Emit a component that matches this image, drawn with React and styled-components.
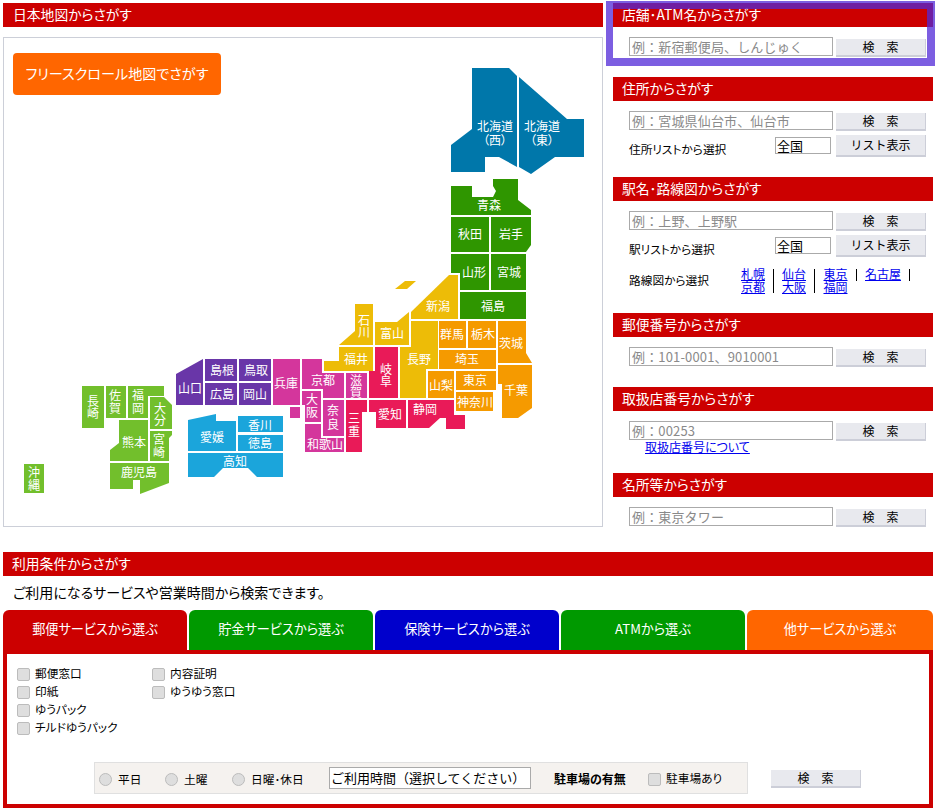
import React from "react";
import styled, { createGlobalStyle } from "styled-components";

const GlobalStyle = createGlobalStyle`
  html, body { margin: 0; padding: 0; background: #fff; }
  body {
    font-family: "Noto Sans CJK JP", "Liberation Sans", sans-serif;
    font-feature-settings: "palt";
    font-size: 11.7px;
    color: #000;
  }
`;

const Page = styled.div`
  width: 930px;
  padding: 3px 2px 3px 3px;
`;
const TopRow = styled.div`
  display: flex;
  gap: 10px;
`;
const LeftCol = styled.div`
  width: 600px;
`;
const RightCol = styled.div`
  position: relative;
  width: 320px;
  display: flex;
  flex-direction: column;
  gap: 20px;
`;
const Bar = styled.h2`
  margin: 0;
  height: 24px;
  line-height: 23px;
  padding-left: ${(p) => p.$pad || 9}px;
  background: #cc0000;
  color: #fff;
  font-size: 13.8px;
  font-weight: 400;
`;
const MapBox = styled.div`
  position: relative;
  box-sizing: border-box;
  margin-top: 10px;
  width: 600px;
  height: 490px;
  border: 1px solid #cccfd8;
`;
const ScrollLink = styled.a`
  position: absolute;
  left: 9px;
  top: 15px;
  width: 208px;
  height: 42px;
  line-height: 40px;
  text-align: center;
  border-radius: 4px;
  background: #ff6600;
  color: #fff;
  font-size: 14.1px;
`;
const MapSvg = styled.svg`
  display: block;
`;
const MapLabel = styled.text`
  fill: #fff;
  font-size: 12px;
  text-anchor: middle;
  dominant-baseline: central;
`;
const Focus = styled.div`
  position: absolute;
  left: -7px;
  top: -2px;
  box-sizing: border-box;
  width: 329px;
  height: 65px;
  border: 8px solid rgba(80, 40, 215, 0.75);
  border-left-width: 7px;
  pointer-events: none;
`;
const Row = styled.div`
  display: flex;
  align-items: flex-start;
  height: ${(p) => p.$h}px;
  padding-left: 16px;
  margin-top: ${(p) => p.$top}px;
`;
const TextBox = styled.input`
  box-sizing: border-box;
  width: 204px;
  height: 19px;
  padding: 0 3px 0 2px;
  border: 1px solid #aaa;
  font: inherit;
  font-size: 13px;
  letter-spacing: 0.15px;
  font-feature-settings: normal;
  outline: none;
  &::placeholder { color: #8a8a8a; opacity: 1; }
`;
const GrayButton = styled.button`
  box-sizing: border-box;
  width: 90px;
  height: ${(p) => p.$h || 18}px;
  margin-top: ${(p) => p.$top || 0}px;
  margin-left: ${(p) => p.$left || 0}px;
  padding: 0;
  border: solid #ccced8;
  border-width: 0 1px 2px 0;
  background: #e8e9ee;
  color: #000;
  font: inherit;
  font-size: 12px;
  font-feature-settings: normal;
  line-height: 1;
`;
const ListLabel = styled.span`
  width: 146px;
  margin-top: 6px;
  line-height: 16px;
`;
const Area = styled.select`
  appearance: none;
  box-sizing: border-box;
  width: 56px;
  height: 17px;
  margin: 2px 0 0 0;
  padding: 0 1px;
  border: 1px solid #aaa;
  border-radius: 0;
  background: #fff;
  color: #000;
  font: inherit;
  font-size: 13px;
  line-height: 15px;
  outline: none;
`;
const LinkRow = styled.div`
  display: flex;
  align-items: flex-start;
  padding-left: 16px;
  margin-top: 11px;
  height: 25px;
`;
const RouteLabel = styled.span`
  width: 112px;
  line-height: 24px;
`;
const RouteLink = styled.a`
  display: block;
  color: #0000ee;
  text-decoration: underline;
  line-height: 12.5px;
  font-size: 12px;
  text-align: center;
`;
const RouteGroup = styled.div`
  width: ${(p) => p.$w}px;
`;
const Sep = styled.i`
  display: block;
  width: 1px;
  height: ${(p) => (p.$short ? 12 : 24)}px;
  margin: 1px 8px 0 8px;
  background: #000;
`;
const AboutLink = styled.a`
  display: block;
  margin: -1px 0 0 32px;
  height: 13px;
  line-height: 13px;
  font-size: 12px;
  color: #0000ee;
  text-decoration: underline;
`;
const Conditions = styled.section`
  margin-top: 25px;
`;
const Note = styled.p`
  margin: 0;
  height: 34px;
  padding-left: 10px;
  line-height: 33px;
  font-size: 14px;
`;
const Tabs = styled.div`
  display: flex;
  gap: 2px;
`;
const Tab = styled.div`
  width: ${(p) => p.$w || 184}px;
  height: 40px;
  line-height: 37px;
  text-align: center;
  border-radius: 6px 6px 0 0;
  background: ${(p) => p.$color};
  color: #fff;
  font-size: 13.2px;
`;
const Panel = styled.div`
  box-sizing: border-box;
  display: flex;
  flex-direction: column;
  justify-content: space-between;
  height: 158px;
  padding: 10px 0 10px;
  border: 4px solid #cc0000;
`;
const Checks = styled.div`
  display: flex;
  padding-left: 10px;
`;
const CheckCol = styled.div`
  width: 135px;
`;
const CheckRow = styled.label`
  display: flex;
  align-items: center;
  gap: 5px;
  height: 18px;
  line-height: 18px;
`;
const Check = styled.input`
  appearance: none;
  box-sizing: border-box;
  flex: none;
  width: 13px;
  height: 13px;
  margin: 2px 0 0;
  border: 1px solid #bcbcbc;
  border-radius: 2px;
  background: #dedede;
`;
const Radio = styled(Check)`
  border-radius: 50%;
  margin-right: 1px;
`;
const BottomRow = styled.div`
  display: flex;
  align-items: center;
  padding-left: 87px;
`;
const Strip = styled.div`
  box-sizing: border-box;
  display: flex;
  align-items: center;
  width: 654px;
  height: 32px;
  padding-left: 4px;
  border: 1px solid #e0e0e0;
  background: #f5f2ef;
`;
const RadioItem = styled.label`
  display: flex;
  align-items: center;
  gap: 5px;
  width: ${(p) => p.$w}px;
  flex: none;
`;
const Hours = styled(Area)`
  width: 202px;
  height: 22px;
  margin: 0;
  font-size: 13px;
  line-height: 20px;
  font-feature-settings: normal;
`;
const ParkingTitle = styled.b`
  width: 94px;
  margin-left: 23px;
  font-size: 12px;
  font-weight: 700;
`;
const ParkingRow = styled(CheckRow)`
  height: auto;
`;

const BLUE = "#0077aa";
const GREEN = "#2f9600";
const YELLOW = "#edbc07";
const ORANGE = "#f59a00";
const RED = "#e91a58";
const MAGENTA = "#d4369c";
const PURPLE = "#6936a8";
const SKY = "#1ba5db";
const LIME = "#72bf2c";

const prefectures = [
  [BLUE, "472,68 509,68 517,76 517,167 499,157 485,157 485,172 451,172 451,145 472,129", [[495, 126, "北海道"], [495, 140, "（西）"]]],
  [BLUE, "519,77 567,119 584,119 584,157 555,157 531,174 519,167", [[542, 126, "北海道"], [542, 140, "（東）"]]],
  [GREEN, "451,186 472,186 472,197 493,197 496,191 493,186 493,179 518,179 518,200 531,210 531,215 451,215", [[489, 205, "青森"]]],
  [GREEN, "451,217 489,217 489,252 451,252", [[470, 234, "秋田"]]],
  [GREEN, "491,217 531,217 531,245 526,252 491,252", [[511, 234, "岩手"]]],
  [GREEN, "451,254 489,254 489,290 460,290 460,273 451,273", [[474, 272, "山形"]]],
  [GREEN, "491,254 526,254 526,290 491,290", [[509, 272, "宮城"]]],
  [GREEN, "460,292 526,292 526,319 460,319", [[493, 306, "福島"]]],
  [YELLOW, "449,275 458,275 458,319 411,319 411,312", [[438, 306, "新潟"]]],
  [YELLOW, "395,289 405,281 416,281 407,289", []],
  [YELLOW, "355,304 373,304 373,345 339,345 355,331", [[364, 320, "石"], [364, 332, "川"]]],
  [YELLOW, "375,322 397,322 409,312 409,345 375,345", [[392, 333, "富山"]]],
  [YELLOW, "339,347 373,347 373,371 324,371 324,361 339,361", [[356, 359, "福井"]]],
  [YELLOW, "411,321 438,321 438,369 426,369 426,398 400,398 400,347 411,347", [[419, 359, "長野"]]],
  [ORANGE, "439,321 466,321 466,348 439,348", [[452, 334, "群馬"]]],
  [ORANGE, "468,321 496,321 496,348 468,348", [[483, 334, "栃木"]]],
  [ORANGE, "498,321 526,321 526,353 532,363 498,363", [[511, 343, "茨城"]]],
  [ORANGE, "439,350 496,350 496,369 439,369", [[467, 359, "埼玉"]]],
  [ORANGE, "428,371 454,371 454,398 428,398", [[441, 385, "山梨"]]],
  [ORANGE, "456,371 496,371 496,390 456,390", [[475, 380, "東京"]]],
  [ORANGE, "456,392 493,392 493,411 456,411", [[475, 402, "神奈川"]]],
  [ORANGE, "498,365 532,365 532,408 518,418 502,418 502,384 498,384", [[516, 390, "千葉"]]],
  [RED, "375,347 398,347 398,398 369,398 369,371 375,371", [[386, 369, "岐"], [386, 381, "阜"]]],
  [RED, "408,400 454,400 454,415 465,415 465,429 446,429 446,418 440,418 429,428 408,428", [[425, 409, "静岡"]]],
  [RED, "369,400 406,400 406,428 376,428 376,412 369,412", [[390, 414, "愛知"]]],
  [RED, "346,400 367,400 367,412 362,412 362,452 346,452", [[354, 418, "三"], [354, 431, "重"]]],
  [MAGENTA, "346,373 367,373 367,398 346,398", [[356, 380, "滋"], [356, 392, "賀"]]],
  [MAGENTA, "302,359 322,359 322,373 344,373 344,398 323,398 323,389 302,389", [[323, 380, "京都"]]],
  [MAGENTA, "302,391 321,391 321,422 305,422 305,405 302,405", [[312, 399, "大"], [312, 412, "阪"]]],
  [MAGENTA, "323,400 344,400 344,436 323,436", [[333, 410, "奈"], [333, 424, "良"]]],
  [MAGENTA, "305,424 321,424 321,438 344,438 344,452 305,452", [[325, 444, "和歌山"]]],
  [MAGENTA, "273,359 300,359 300,405 273,405", [[286, 383, "兵庫"]]],
  [MAGENTA, "290,407 300,407 300,418 290,418", []],
  [PURPLE, "239,359 271,359 271,381 239,381", [[256, 370, "鳥取"]]],
  [PURPLE, "205,359 237,359 237,381 205,381", [[222, 370, "島根"]]],
  [PURPLE, "239,383 271,383 271,405 239,405", [[255, 394, "岡山"]]],
  [PURPLE, "205,383 237,383 237,405 205,405", [[222, 394, "広島"]]],
  [PURPLE, "203,359 203,405 176,405 176,374", [[190, 388, "山口"]]],
  [SKY, "188,420 216,414 216,421 236,421 236,451 188,451", [[212, 437, "愛媛"]]],
  [SKY, "238,416 283,416 283,432 238,432", [[260, 425, "香川"]]],
  [SKY, "238,435 283,435 283,451 238,451", [[260, 443, "徳島"]]],
  [SKY, "188,453 283,453 283,477 257,477 248,468 223,468 214,477 188,477", [[235, 461, "高知"]]],
  [LIME, "82,386 104,386 104,428 82,428", [[93, 401, "長"], [93, 413, "崎"]]],
  [LIME, "106,386 126,386 126,418 106,418", [[115, 395, "佐"], [115, 408, "賀"]]],
  [LIME, "128,386 164,386 164,396 148,396 148,418 128,418", [[138, 395, "福"], [138, 408, "岡"]]],
  [LIME, "150,397 164,397 172,405 172,429 150,429", [[160, 408, "大"], [160, 420, "分"]]],
  [LIME, "119,420 148,420 148,461 110,461 110,450 119,443", [[134, 442, "熊本"]]],
  [LIME, "150,431 172,431 172,435 169,438 169,461 150,461", [[159, 439, "宮"], [159, 452, "崎"]]],
  [LIME, "110,463 169,463 169,483 140,494 140,480 133,480 133,489 110,489", [[139, 472, "鹿児島"]]],
  [LIME, "24,464 44,464 44,493 24,493", [[34, 472, "沖"], [34, 485, "縄"]]],
];

function JapanMap() {
  return (
    <MapSvg width="598" height="488" viewBox="4 38 598 488">
      {prefectures.map(([fill, points, labels]) => (
        <g key={points}>
          <polygon fill={fill} points={points} />
          {labels.map(([x, y, text]) => (
            <MapLabel key={text + y} x={x} y={y - 1}>
              {text}
            </MapLabel>
          ))}
        </g>
      ))}
    </MapSvg>
  );
}

function SearchRow({ placeholder }) {
  return (
    <Row $h={20} $top={10}>
      <TextBox placeholder={placeholder} />
      <GrayButton $top={2} $left={3}>検　索</GrayButton>
    </Row>
  );
}

function ListRow({ label }) {
  return (
    <Row $h={22} $top={4}>
      <ListLabel>{label}</ListLabel>
      <Area defaultValue="全国">
        <option>全国</option>
      </Area>
      <GrayButton $h={22} $left={5}>リスト表示</GrayButton>
    </Row>
  );
}

export default function App() {
  return (
    <Page>
      <GlobalStyle />
      <TopRow>
        <LeftCol>
          <Bar $pad={10}>日本地図からさがす</Bar>
          <MapBox>
            <JapanMap />
            <ScrollLink>フリースクロール地図でさがす</ScrollLink>
          </MapBox>
        </LeftCol>
        <RightCol>
          <Focus />
          <div>
            <Bar>店舗･ATM名からさがす</Bar>
            <SearchRow placeholder="例：新宿郵便局、しんじゅく" />
          </div>
          <div>
            <Bar>住所からさがす</Bar>
            <SearchRow placeholder="例：宮城県仙台市、仙台市" />
            <ListRow label="住所リストから選択" />
          </div>
          <div>
            <Bar>駅名･路線図からさがす</Bar>
            <SearchRow placeholder="例：上野、上野駅" />
            <ListRow label="駅リストから選択" />
            <LinkRow>
              <RouteLabel>路線図から選択</RouteLabel>
              <RouteGroup $w={24}>
                <RouteLink>札幌</RouteLink>
                <RouteLink>京都</RouteLink>
              </RouteGroup>
              <Sep />
              <RouteGroup $w={24}>
                <RouteLink>仙台</RouteLink>
                <RouteLink>大阪</RouteLink>
              </RouteGroup>
              <Sep />
              <RouteGroup $w={25}>
                <RouteLink>東京</RouteLink>
                <RouteLink>福岡</RouteLink>
              </RouteGroup>
              <Sep $short />
              <RouteGroup $w={36}>
                <RouteLink>名古屋</RouteLink>
              </RouteGroup>
              <Sep $short />
            </LinkRow>
          </div>
          <div>
            <Bar>郵便番号からさがす</Bar>
            <SearchRow placeholder="例：101-0001、9010001" />
          </div>
          <div>
            <Bar>取扱店番号からさがす</Bar>
            <SearchRow placeholder="例：00253" />
            <AboutLink>取扱店番号について</AboutLink>
          </div>
          <div>
            <Bar>名所等からさがす</Bar>
            <SearchRow placeholder="例：東京タワー" />
          </div>
        </RightCol>
      </TopRow>
      <Conditions>
        <Bar>利用条件からさがす</Bar>
        <Note>ご利用になるサービスや営業時間から検索できます。</Note>
        <Tabs>
          <Tab $color="#cc0000">郵便サービスから選ぶ</Tab>
          <Tab $color="#009900">貯金サービスから選ぶ</Tab>
          <Tab $color="#0000cc">保険サービスから選ぶ</Tab>
          <Tab $color="#009900">ATMから選ぶ</Tab>
          <Tab $color="#ff6600" $w={186}>他サービスから選ぶ</Tab>
        </Tabs>
        <Panel>
          <Checks>
            <CheckCol>
              <CheckRow><Check type="checkbox" />郵便窓口</CheckRow>
              <CheckRow><Check type="checkbox" />印紙</CheckRow>
              <CheckRow><Check type="checkbox" />ゆうパック</CheckRow>
              <CheckRow><Check type="checkbox" />チルドゆうパック</CheckRow>
            </CheckCol>
            <CheckCol>
              <CheckRow><Check type="checkbox" />内容証明</CheckRow>
              <CheckRow><Check type="checkbox" />ゆうゆう窓口</CheckRow>
            </CheckCol>
          </Checks>
          <BottomRow>
            <Strip>
              <RadioItem $w={66}><Radio type="radio" name="day" />平日</RadioItem>
              <RadioItem $w={67}><Radio type="radio" name="day" />土曜</RadioItem>
              <RadioItem $w={97}><Radio type="radio" name="day" />日曜･休日</RadioItem>
              <Hours defaultValue="ご利用時間（選択してください）">
                <option>ご利用時間（選択してください）</option>
              </Hours>
              <ParkingTitle>駐車場の有無</ParkingTitle>
              <ParkingRow><Check type="checkbox" />駐車場あり</ParkingRow>
            </Strip>
            <GrayButton $left={23} $top={2}>検　索</GrayButton>
          </BottomRow>
        </Panel>
      </Conditions>
    </Page>
  );
}
